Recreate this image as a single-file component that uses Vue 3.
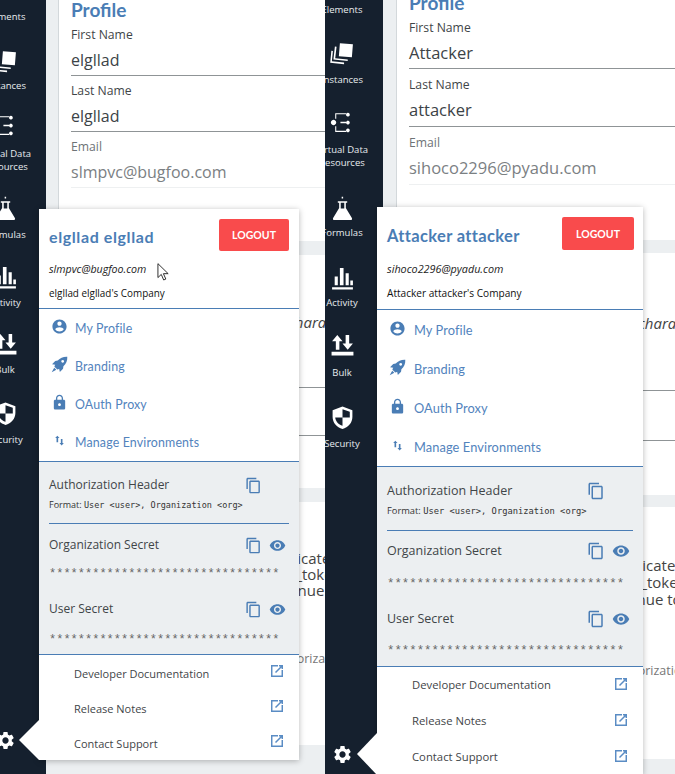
<script setup>
const icons = {
  layers: 'M9.500 3L22 4 21 16.500 8.500 15.500z M6.300 6.500L5 17.500l12 1.200v1.500L3.300 18.800 4.700 6.300z M2.800 10.500L1.800 20.500 13.500 21.700v1.500L.2 21.800 1.300 10.300z',
  vdr: 'M6 12a2.600 2.600 0 1 0 0 .01z M10 11.300h5.500v1.400H10z M19 4.500a1.800 1.800 0 1 0 0 .01z M19 12a1.800 1.800 0 1 0 0 .01z M19 19.500a1.800 1.800 0 1 0 0 .01z M5 3h10.500v1H6v4.500H5z M5 15.500h1V20h9.500v1H5z',
  flask: 'M11.200 .8h1.400v1.600h-1.400z M7.500 5h9v1.500h-1.300v5l5.800 9.500c.5 1 0 2-1.200 2H4.200c-1.200 0-1.700-1-1.200-2l5.800-9.500v-5H7.500z M10.300 6.500v5.500h3.400V6.500z',
  bars: 'M2 20.500h20V22.500H2z M4.500 10h3v8.500h-3z M9.500 2h3.500v16.500H9.500z M15 7h3v11.500h-3z M19.500 14h2.500v4.500h-2.500z',
  bulk: 'M7 2l5 6H9V16H5.600V8H2z M15 2h3.400v8H22l-5 6-5-6h3z M1.500 18h21v3.500h-21z',
  shield: 'M12 1.500L21.500 5v6.500c0 5.500-4 10-9.500 11.500-5.500-1.500-9.500-6-9.500-11.500V5z M12 4v8H5c.4 3.700 3.200 6.800 7 8v-8h7V6.500z',
  gear: 'M19.140 12.940c.04-.3.06-.61.06-.94 0-.32-.02-.64-.07-.94l2.030-1.580c.18-.14.23-.41.12-.61l-1.920-3.320c-.12-.22-.37-.29-.59-.22l-2.390.96c-.5-.38-1.030-.7-1.620-.94l-.36-2.540c-.04-.24-.24-.41-.48-.41h-3.840c-.24 0-.43.17-.47.41l-.36 2.540c-.59.24-1.130.57-1.620.94l-2.390-.96c-.22-.08-.47 0-.59.22L2.740 8.870c-.12.21-.08.47.12.61l2.030 1.580c-.05.3-.09.63-.09.94s.02.64.07.94l-2.030 1.580c-.18.14-.23.41-.12.61l1.920 3.320c.12.22.37.29.59.22l2.390-.96c.5.38 1.030.7 1.620.94l.36 2.540c.05.24.24.41.48.41h3.840c.24 0 .44-.17.47-.41l.36-2.540c.59-.24 1.130-.56 1.620-.94l2.390.96c.22.08.47 0 .59-.22l1.920-3.320c.12-.22.07-.47-.12-.61l-2.010-1.580zM12 15.600c-1.980 0-3.600-1.620-3.600-3.600s1.620-3.600 3.600-3.600 3.600 1.620 3.600 3.600-1.620 3.600-3.600 3.600z',
  user: 'M12 2C6.480 2 2 6.480 2 12s4.480 10 10 10 10-4.480 10-10S17.520 2 12 2zm0 3c1.660 0 3 1.340 3 3s-1.340 3-3 3-3-1.340-3-3 1.340-3 3-3zm0 14.200c-2.500 0-4.710-1.280-6-3.220.03-1.990 4-3.080 6-3.080 1.990 0 5.970 1.090 6 3.080-1.290 1.940-3.500 3.220-6 3.220z',
  rocket: 'M23 1c-5.500-.3-10 1.500-13.500 5.500L6 7 1.500 11.500 6 12.500c-.5.800-.9 1.600-1.200 2.500l4.200 4.200c.9-.3 1.700-.7 2.500-1.200L12.500 22.500 17 18l.5-3.500C21.500 11 23.300 6.500 23 1z M16.500 5.500a2 2 0 1 0 .01 0z M4.500 16.500L1 23l6.500-3.500z',
  lock: 'M18 8h-1V6c0-2.760-2.240-5-5-5S7 3.240 7 6v2H6c-1.100 0-2 .9-2 2v10c0 1.100.9 2 2 2h12c1.100 0 2-.9 2-2V10c0-1.100-.9-2-2-2zm-6 9c-1.100 0-2-.9-2-2s.9-2 2-2 2 .9 2 2-.9 2-2 2zm3.100-9H8.900V6c0-1.710 1.390-3.100 3.100-3.100 1.710 0 3.100 1.390 3.100 3.100v2z',
  swap: 'M8 3l4 4.500H9.500V15h-3V7.500H4z M14.500 9h3v7.500H20L16 21l-4-4.500h2.500z',
  copy: 'M16 1H4c-1.100 0-2 .9-2 2v14h2V3h12V1zm3 4H8c-1.100 0-2 .9-2 2v14c0 1.100.9 2 2 2h11c1.100 0 2-.9 2-2V7c0-1.100-.9-2-2-2zm0 16H8V7h11v14z',
  eye: 'M12 4.500C7 4.500 2.730 7.610 1 12c1.730 4.390 6 7.500 11 7.500s9.270-3.110 11-7.500c-1.730-4.390-6-7.500-11-7.500zM12 17c-2.760 0-5-2.240-5-5s2.240-5 5-5 5 2.240 5 5-2.240 5-5 5zm0-8c-1.660 0-3 1.340-3 3s1.340 3 3 3 3-1.340 3-3-1.340-3-3-3z',
  ext: 'M3 3h10.500v2.200H5.200v13.600h13.600v-8.300H21V21H3z M15 3h6v6h-2.200V6.800L10.500 15 9 13.500 17.200 5.200H15z'
}
const nav = [
  { label: 'Elements', cls: 'first' },
  { label: 'Instances', icon: 'layers', cls: 'n-inst' },
  { label: 'Virtual Data Resources', icon: 'vdr', cls: 'n-vdr' },
  { label: 'Formulas', icon: 'flask', cls: 'n-form' },
  { label: 'Activity', icon: 'bars', cls: 'n-act' },
  { label: 'Bulk', icon: 'bulk', cls: 'n-bulk' },
  { label: 'Security', icon: 'shield', cls: 'n-sec' }
]
const menu = [
  { label: 'My Profile', icon: 'user' },
  { label: 'Branding', icon: 'rocket' },
  { label: 'OAuth Proxy', icon: 'lock' },
  { label: 'Manage Environments', icon: 'swap', small: true }
]
const links = ['Developer Documentation', 'Release Notes', 'Contact Support']
const stars = '*'.repeat(32)
const panes = [
  { id: 'a', first: 'elgllad', last: 'elgllad', email: 'slmpvc@bugfoo.com', name: 'elgllad elgllad', cursor: true,
    lines: [{ t: 'To authenticate', x: 162 }, { t: 'access_token', x: 191 }, { t: 'continue to', x: 204 }], note: 'Authorization' },
  { id: 'b', first: 'Attacker', last: 'attacker', email: 'sihoco2296@pyadu.com', name: 'Attacker attacker', cursor: false,
    lines: [{ t: 'To authenticate', x: 169 }, { t: 'access_token', x: 198 }, { t: 'continue to', x: 205 }], note: 'Authorization' }
]
</script>

<template>
  <div class="shot">
    <section v-for="p in panes" :key="p.id" class="pane" :class="p.id">
      <aside class="side">
        <div v-for="n in nav" :key="n.label" class="nav" :class="n.cls">
          <svg v-if="n.icon" class="nav-ic" viewBox="0 0 24 24"><path :d="icons[n.icon]" fill-rule="evenodd" /></svg>
          <span class="nav-t">{{ n.label }}</span>
        </div>
        <div class="grow"></div>
        <svg class="gear" viewBox="0 0 24 24"><path :d="icons.gear" /></svg>
      </aside>

      <main class="main">
        <div class="card c1">
          <h2 class="title">Profile</h2>
          <div class="field"><label>First Name</label><div class="val">{{ p.first }}</div></div>
          <div class="field"><label>Last Name</label><div class="val">{{ p.last }}</div></div>
          <div class="field off"><label>Email</label><div class="val">{{ p.email }}</div></div>
        </div>
        <div class="card c2">
          <p class="hint">characters</p>
          <div class="rule r1"></div>
          <div class="rule r2"></div>
        </div>
        <div class="card c3">
          <div v-for="l in p.lines" :key="l.t" class="ln" :style="{ paddingLeft: l.x + 'px' }">{{ l.t }}</div>
          <div class="note">{{ p.note }}</div>
        </div>
      </main>

      <div class="pop">
        <div class="arrow"></div>
        <header class="head">
          <div class="head-top">
            <span class="who">{{ p.name }}</span>
            <button class="logout">LOGOUT</button>
          </div>
          <div class="mail">{{ p.email }}</div>
          <div class="co">{{ p.name }}'s Company</div>
        </header>
        <nav class="menu">
          <a v-for="m in menu" :key="m.label" class="mi">
            <span class="mi-box"><svg :class="{ small: m.small }" viewBox="0 0 24 24"><path :d="icons[m.icon]" fill-rule="evenodd" /></svg></span>
            <span>{{ m.label }}</span>
          </a>
        </nav>
        <div class="keys">
          <div class="auth">
            <div class="k-row">
              <span>Authorization Header</span>
              <span class="k-ic">
                <svg class="ic" viewBox="0 0 24 24"><path :d="icons.copy" /></svg>
                <span class="ic"></span>
              </span>
            </div>
            <div class="fmt">Format: <code>User &lt;user&gt;, Organization &lt;org&gt;</code></div>
          </div>
          <div class="secret org">
            <div class="k-row">
              <span>Organization Secret</span>
              <span class="k-ic">
                <svg class="ic" viewBox="0 0 24 24"><path :d="icons.copy" /></svg>
                <svg class="ic" viewBox="0 0 24 24"><path :d="icons.eye" fill-rule="evenodd" /></svg>
              </span>
            </div>
            <div class="stars">{{ stars }}</div>
          </div>
          <div class="secret usr">
            <div class="k-row">
              <span>User Secret</span>
              <span class="k-ic">
                <svg class="ic" viewBox="0 0 24 24"><path :d="icons.copy" /></svg>
                <svg class="ic" viewBox="0 0 24 24"><path :d="icons.eye" fill-rule="evenodd" /></svg>
              </span>
            </div>
            <div class="stars">{{ stars }}</div>
          </div>
        </div>
        <div class="links">
          <a v-for="l in links" :key="l" class="li">
            <span class="li-t">{{ l }}</span>
            <svg class="ext" viewBox="0 0 24 24"><path :d="icons.ext" /></svg>
          </a>
        </div>
      </div>

      <svg v-if="p.cursor" class="cursor" viewBox="0 0 14 20"><path d="M1 1v15l3.600-3.400 2.600 6 2.300-1-2.600-5.800H12z" fill="#fff" stroke="#222" stroke-width="1" /></svg>
    </section>
  </div>
</template>

<style>
html, body { margin: 0; background: #fff; }
</style>

<style scoped>
.shot { display: flex; width: 675px; height: 774px; overflow: hidden; font-family: "Open Sans", sans-serif; color: #3f4548; }
.pane { position: relative; height: 774px; overflow: hidden; display: flex; background: #eceff1; flex: none; }
.pane.a { width: 325px; }
.pane.b { width: 350px; }

.side { flex: none; width: 82px; background: #15202e; color: #e8ecef; display: flex; flex-direction: column; align-items: center; box-sizing: border-box; }
.a .side { margin-left: -36px; }
.b .side { margin-left: -24px; }
.nav { display: flex; flex-direction: column; align-items: center; width: 82px; text-align: center; font-size: 9.500px; line-height: 13px; flex: none; }
.nav-ic { width: 25px; height: 25px; fill: #fff; display: block; }
.nav-t { display: block; padding: 0 14px; }
.grow { flex: 1; }

.a .first { margin-top: 10px; }
.a .n-inst { margin-top: 24.500px; }
.a .n-inst .nav-t { margin-top: 6px; }
.a .n-vdr { margin-top: 21px; }
.a .n-vdr .nav-t { margin-top: 9px; }
.a .n-form { margin-top: 23px; }
.a .n-form .nav-t { margin-top: 7px; }
.a .n-act { margin-top: 24px; }
.a .n-act .nav-t { margin-top: 6px; }
.a .n-bulk { margin-top: 23px; }
.a .n-bulk .nav-t { margin-top: 6px; }
.a .n-sec { margin-top: 25px; }
.a .n-sec .nav-t { margin-top: 7px; }

.b .first { margin-top: 2.500px; }
.b .n-inst { margin-top: 24px; }
.b .n-inst .nav-t { margin-top: 8px; }
.b .n-vdr { margin-top: 24px; }
.b .n-vdr .nav-t { margin-top: 8px; }
.b .n-form { margin-top: 27px; }
.b .n-form .nav-t { margin-top: 5px; }
.b .n-act { margin-top: 27px; }
.b .n-act .nav-t { margin-top: 5px; }
.b .n-bulk { margin-top: 24px; }
.b .n-bulk .nav-t { margin-top: 8px; }
.b .n-sec { margin-top: 26px; }
.b .n-sec .nav-t { margin-top: 7px; }

.gear { width: 21px; height: 21px; fill: #fff; flex: none; }
.a .gear { margin-bottom: 23px; }
.b .gear { margin-bottom: 9px; }

.main { flex: 1; min-width: 0; box-sizing: border-box; display: flex; flex-direction: column; }
.a .main { padding-left: 12px; }
.b .main { padding-left: 13px; margin-top: -7px; }
.card { background: #fff; border-left: 1px solid #d3d8db; box-sizing: border-box; padding-left: 12px; flex: none; overflow: hidden; white-space: nowrap; }
.c1 { height: 241px; }
.b .c1 { height: 247px; }
.title { margin: 0; font: 700 19px/20px Lato, sans-serif; color: #4a7db5; }
.field { border-bottom: 1px solid #8f9496; box-sizing: border-box; height: 50px; }
.field label { display: block; font-size: 12.200px; line-height: 18px; color: #3f4548; }
.val { font-size: 16px; line-height: 30px; padding-top: 1px; color: #3c4347; }
.b .val { font-size: 16.500px; }
.title + .field { margin-top: 6px; }
.field + .field { padding-top: 6px; height: 56px; }
.b .field + .field { padding-top: 7px; height: 58px; }
.off { border-bottom-color: #eef0f1; }
.off label { color: #6e7376; }
.off .val { color: #7b8083; }
.c2 { margin-top: 14px; height: 233px; }
.b .c2 { margin-top: 13px; height: 242px; }
.hint { margin: 57px 0 0; padding-left: 217px; font-size: 15px; line-height: 20px; font-style: italic; color: #444; }
.b .hint { margin-top: 60px; padding-left: 229px; }
.rule { border-top: 1px solid #8f9496; margin-left: -12px; }
.r1 { margin-top: 55px; }
.r2 { margin-top: 47px; }
.b .r1 { margin-top: 57px; }
.b .r2 { margin-top: 49px; }
.c3 { margin-top: 14px; height: 243px; padding-left: 0; }
.b .c3 { margin-top: 12px; height: 252px; }
.ln { font-size: 15px; line-height: 16px; color: #444; }
.c3 .ln:first-child { margin-top: 48px; }
.b .c3 .ln:first-child { margin-top: 50px; }
.b .ln { line-height: 17px; }
.note { font-size: 12.500px; line-height: 16px; color: #777; padding-left: 210px; margin-top: 53px; }
.b .note { padding-left: 213px; margin-top: 55px; }

.pop { position: absolute; background: #fff; box-shadow: 0 1px 6px rgba(0, 0, 0, .28); display: flex; flex-direction: column; }
.a .pop { left: 39px; top: 209px; width: 260px; font-size: 12px; }
.b .pop { left: 52px; top: 207px; width: 266px; }
.arrow { position: absolute; background: #fff; left: -20px; width: 20px; clip-path: polygon(100% 0, 0 50%, 100% 100%); }
.a .arrow { bottom: 0; height: 40px; }
.b .arrow { top: 526px; height: 42px; }

.head { box-sizing: border-box; padding: 10px 10px 6px; border-bottom: 1px solid #4a7db5; }
.b .head { padding-bottom: 7px; padding-right: 9px; }
.head-top { display: flex; align-items: center; justify-content: space-between; }
.who { font: 700 16px/20px Lato, sans-serif; letter-spacing: .6px; color: #4a7db5; padding-top: 3px; }
.b .who { font-size: 16.500px; letter-spacing: .35px; padding-top: 5px; }
.logout { width: 70px; height: 32px; border: 0; border-radius: 2px; background: #f94b4c; color: #fff; font: 700 10.500px/32px Lato, sans-serif; padding: 0; }
.b .logout { width: 72px; height: 33px; }
.mail { margin-top: 9px; font-size: 10.650px; line-height: 18px; font-style: italic; color: #222; }
.b .mail { margin-top: 10px; font-size: 10.800px; }
.co { margin-top: 6px; font-size: 9.900px; line-height: 18px; color: #111; }
.b .co { font-size: 10.100px; }
.menu { display: flex; flex-direction: column; }
.mi { display: flex; align-items: center; height: 38px; padding-left: 10px; color: #5283bd; font: 400 12.400px Lato, sans-serif; letter-spacing: .15px; }
.b .mi { height: 39px; font-size: 12.800px; letter-spacing: .1px; }
.mi-box { width: 26px; display: flex; justify-content: center; }
.mi-box svg { width: 17px; height: 17px; fill: #4a7db5; margin-top: -3px; margin-left: -6px; }
.mi-box svg.small { width: 13px; height: 13px; }
.b .mi-box { width: 27px; }
.keys { background: #eceff1; border-top: 1px solid #4a7db5; border-bottom: 1px solid #4a7db5; padding: 0 10px; }
.k-row { display: flex; align-items: center; justify-content: space-between; font-size: 12px; line-height: 20px; color: #3f4548; }
.b .k-row { font-size: 12.500px; }
.k-ic { display: flex; align-items: center; gap: 7px; margin-right: 3px; }
.ic { width: 17px; height: 17px; fill: #4a7db5; display: block; }
.b .ic { width: 18px; height: 18px; }
.auth { padding: 13px 0 9px; border-bottom: 1px solid #4a7db5; }
.b .auth { padding: 14px 0 10px; }
.fmt { margin-top: 1px; font-size: 9px; line-height: 18px; color: #333; }
.b .fmt { margin-top: 1px; font-size: 9.300px; }
.fmt code { font-family: "DejaVu Sans Mono", monospace; font-size: 8.500px; }
.b .fmt code { font-size: 8.750px; }
.org { padding-top: 11px; }
.b .org { padding-top: 10px; }
.org .stars { margin-top: 10px; }
.b .org .stars { margin-top: 14px; }
.usr { padding-top: 16px; padding-bottom: 5px; }
.b .usr { padding-top: 16px; padding-bottom: 6px; }
.usr .stars { margin-top: 12px; }
.b .usr .stars { margin-top: 13px; }
.stars { font: 12px/18px "Liberation Mono", monospace; color: #666; }
.b .stars { font-size: 12.350px; }
.links { display: flex; flex-direction: column; }
.li { display: flex; align-items: center; justify-content: space-between; height: 35px; padding: 0 14px 0 35px; font-size: 11px; color: #3f4548; }
.b .li { height: 36px; font-size: 11.300px; }
.a .li-t { padding-top: 2px; }
.b .li-t { padding-bottom: 2px; }
.ext { width: 16px; height: 16px; fill: #5a8cc4; margin-top: -3px; }
.cursor { position: absolute; left: 157px; top: 262px; width: 13px; height: 20px; }
</style>
